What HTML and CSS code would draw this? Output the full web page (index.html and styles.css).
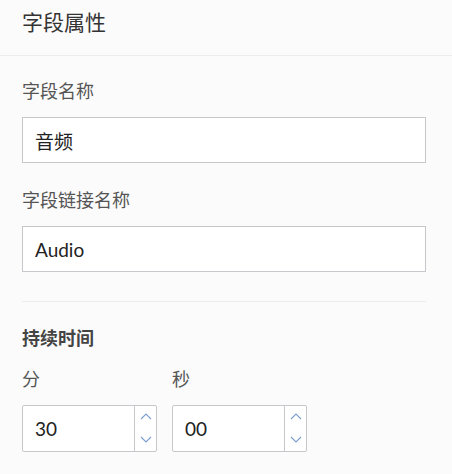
FILE: index.html
```html
<!DOCTYPE html>
<html>
<head>
    <title>字段属性</title>
    <link rel="stylesheet" href="styles.css">
</head>
<body>
    <div class="panel">
        <div class="panel-header">字段属性</div>
        <div class="panel-body">
            <div class="field">
                <label class="field-label">字段名称</label>
                <input class="text-input" type="text" value="音频">
            </div>
            <div class="field">
                <label class="field-label">字段链接名称</label>
                <input class="text-input" type="text" value="Audio">
            </div>
            <hr class="divider">
            <div class="section-title">持续时间</div>
            <div class="duration">
                <div class="field">
                    <label class="field-label">分</label>
                    <div class="number-input">
                        <input type="text" value="30">
                        <div class="spinner">
                            <svg width="12" height="7" viewBox="0 0 12 7"><path d="M1 6 L6 1 L11 6" fill="none" stroke="#7f9fd0" stroke-width="1.2"/></svg>
                            <svg width="12" height="7" viewBox="0 0 12 7"><path d="M1 1 L6 6 L11 1" fill="none" stroke="#7f9fd0" stroke-width="1.2"/></svg>
                        </div>
                    </div>
                </div>
                <div class="field">
                    <label class="field-label">秒</label>
                    <div class="number-input">
                        <input type="text" value="00">
                        <div class="spinner">
                            <svg width="12" height="7" viewBox="0 0 12 7"><path d="M1 6 L6 1 L11 6" fill="none" stroke="#7f9fd0" stroke-width="1.2"/></svg>
                            <svg width="12" height="7" viewBox="0 0 12 7"><path d="M1 1 L6 6 L11 1" fill="none" stroke="#7f9fd0" stroke-width="1.2"/></svg>
                        </div>
                    </div>
                </div>
            </div>
        </div>
    </div>
</body>
</html>
```

FILE: styles.css
```css
body {
    margin: 0;
    background: #fbfbfb;
    font-family: Lato, "Noto Sans CJK SC", sans-serif;
    color: #444;
}

.panel-header {
    height: 56px;
    padding: 6px 22px 0;
    box-sizing: border-box;
    font-size: 21px;
    color: #333;
    border-bottom: 1px solid #ececec;
}

.panel-body {
    padding: 22px 26px 0 22px;
}

.field {
    display: flex;
    flex-direction: column;
}

.field-label {
    font-size: 18px;
    line-height: 26px;
    color: #555;
    margin-bottom: 13px;
}

.text-input {
    height: 46px;
    box-sizing: border-box;
    border: 1px solid #c6c6cb;
    background: #fff;
    padding: 0 12px;
    font-family: inherit;
    font-size: 19px;
    color: #222;
    margin: 0 0 24px;
    outline: none;
}

.divider {
    border: none;
    border-top: 1px solid #ececec;
    margin: 5px 0 23px;
}

.section-title {
    font-size: 18px;
    font-weight: bold;
    color: #444;
    line-height: 26px;
    margin-bottom: 15px;
}

.duration {
    display: flex;
    gap: 15px;
}

.number-input {
    display: flex;
    width: 135px;
    height: 47px;
    box-sizing: border-box;
    border: 1px solid #c6c6cb;
    border-radius: 2px;
    background: #fff;
}

.number-input input {
    width: 100%;
    min-width: 0;
    border: none;
    outline: none;
    padding: 0 12px;
    font-family: inherit;
    font-size: 19px;
    color: #222;
    background: transparent;
}

.spinner {
    width: 21px;
    flex-shrink: 0;
    border-left: 1px solid #c6c6cb;
    display: flex;
    flex-direction: column;
    justify-content: space-between;
    align-items: center;
    padding: 7px 0 8px;
}

.spinner svg {
    display: block;
}
```
